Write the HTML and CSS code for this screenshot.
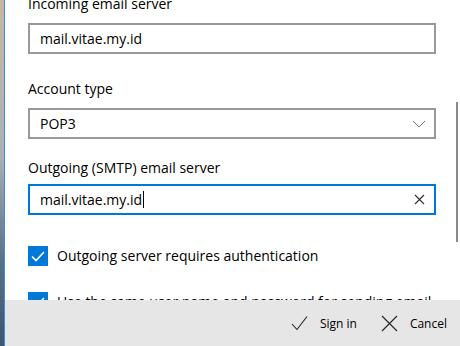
FILE: index.html
```html
<!DOCTYPE html>
<html lang="en">
<head>
   <meta charset="UTF-8">
   <title>Account settings</title>
   <link rel="stylesheet" href="styles.css">
</head>
<body>
   <div class="window">
      <div class="desktop-edge"></div>
      <div class="dialog">
         <div class="scroller">
            <div class="form">
               <label class="field-label">Incoming email server</label>
               <div class="textbox">mail.vitae.my.id</div>

               <label class="field-label gap-top">Account type</label>
               <div class="textbox select">
                  POP3
                  <svg class="chevron" width="14" height="8" viewBox="0 0 14 8">
                     <polyline points="1,1 7,7 13,1" fill="none" stroke="#777" stroke-width="1"/>
                  </svg>
               </div>

               <label class="field-label gap-top short">Outgoing (SMTP) email server</label>
               <div class="textbox focused">
                  <span>mail.vitae.my.id<span class="caret"></span></span>
                  <svg class="clear" width="11" height="11" viewBox="0 0 11 11">
                     <path d="M1 1 L10 10 M10 1 L1 10" stroke="#333" stroke-width="1.2"/>
                  </svg>
               </div>

               <div class="check-row">
                  <span class="checkbox">
                     <svg width="20" height="20" viewBox="0 0 20 20">
                        <polyline points="4,10.5 8,14.5 16,6" fill="none" stroke="#fff" stroke-width="1.6"/>
                     </svg>
                  </span>
                  Outgoing server requires authentication
               </div>
               <div class="check-row">
                  <span class="checkbox">
                     <svg width="20" height="20" viewBox="0 0 20 20">
                        <polyline points="4,10.5 8,14.5 16,6" fill="none" stroke="#fff" stroke-width="1.6"/>
                     </svg>
                  </span>
                  Use the same user name and password for sending email
               </div>
            </div>
            <div class="scrollbar"></div>
         </div>
         <div class="footer">
            <button class="action">
               <svg width="17" height="16" viewBox="0 0 17 16">
                  <polyline points="1,9 6,14.5 16,1.5" fill="none" stroke="#222" stroke-width="1.1"/>
               </svg>
               Sign in
            </button>
            <button class="action">
               <svg width="17" height="17" viewBox="0 0 17 17">
                  <path d="M1 1 L16 16 M16 1 L1 16" stroke="#222" stroke-width="1.1"/>
               </svg>
               Cancel
            </button>
         </div>
      </div>
   </div>
</body>
</html>
```

FILE: styles.css
```css
html, body {
   margin: 0;
   padding: 0;
}

body {
   font-family: "Open Sans", "Noto Sans", sans-serif;
   font-size: 14px;
   color: #000;
   background: #fff;
}

.window {
   display: flex;
   width: 460px;
   height: 346px;
   overflow: hidden;
}

.desktop-edge {
   width: 4px;
   flex-shrink: 0;
   background: linear-gradient(to bottom, #c9b6a2 0%, #aab0b8 45%, #5a7089 75%, #3c5670 100%);
   border-right: 1px solid #3d8ee0;
}

.dialog {
   flex: 1;
   display: flex;
   flex-direction: column;
}

.scroller {
   position: relative;
   height: 300px;
   overflow: hidden;
}

.form {
   display: flex;
   flex-direction: column;
   width: 408px;
   margin-top: -6px;
   padding-left: 23px;
}

.field-label {
   line-height: 20px;
   margin-bottom: 9px;
}

.gap-top {
   margin-top: 25px;
}

.short {
   margin-top: 19px;
   margin-bottom: 6px;
}

.textbox {
   box-sizing: border-box;
   height: 31px;
   border: 2px solid #999;
   padding: 0 10px;
   display: flex;
   align-items: center;
   justify-content: space-between;
   line-height: 20px;
}

.focused {
   border-color: #0078d7;
}

.caret {
   display: inline-block;
   width: 1px;
   height: 17px;
   background: #000;
   vertical-align: -3px;
   margin-left: 1px;
}

.chevron {
   margin-right: -2px;
}

.clear {
   margin-right: -1px;
}

.check-row {
   display: flex;
   align-items: center;
   gap: 9px;
   margin-top: 31px;
   line-height: 20px;
   white-space: nowrap;
}

.check-row + .check-row {
   margin-top: 26px;
}

.checkbox {
   width: 20px;
   height: 20px;
   background: #0078d7;
   display: flex;
}

.scrollbar {
   position: absolute;
   right: 2px;
   top: 102px;
   width: 2px;
   height: 140px;
   background: #8a8a8a;
}

.footer {
   height: 46px;
   background: #e6e6e6;
   display: flex;
   justify-content: flex-end;
   align-items: center;
   gap: 24px;
   padding-right: 13px;
}

.action {
   display: flex;
   align-items: center;
   gap: 12px;
   border: none;
   background: none;
   padding: 0;
   font-family: inherit;
   font-size: 12px;
   color: #000;
}
```
